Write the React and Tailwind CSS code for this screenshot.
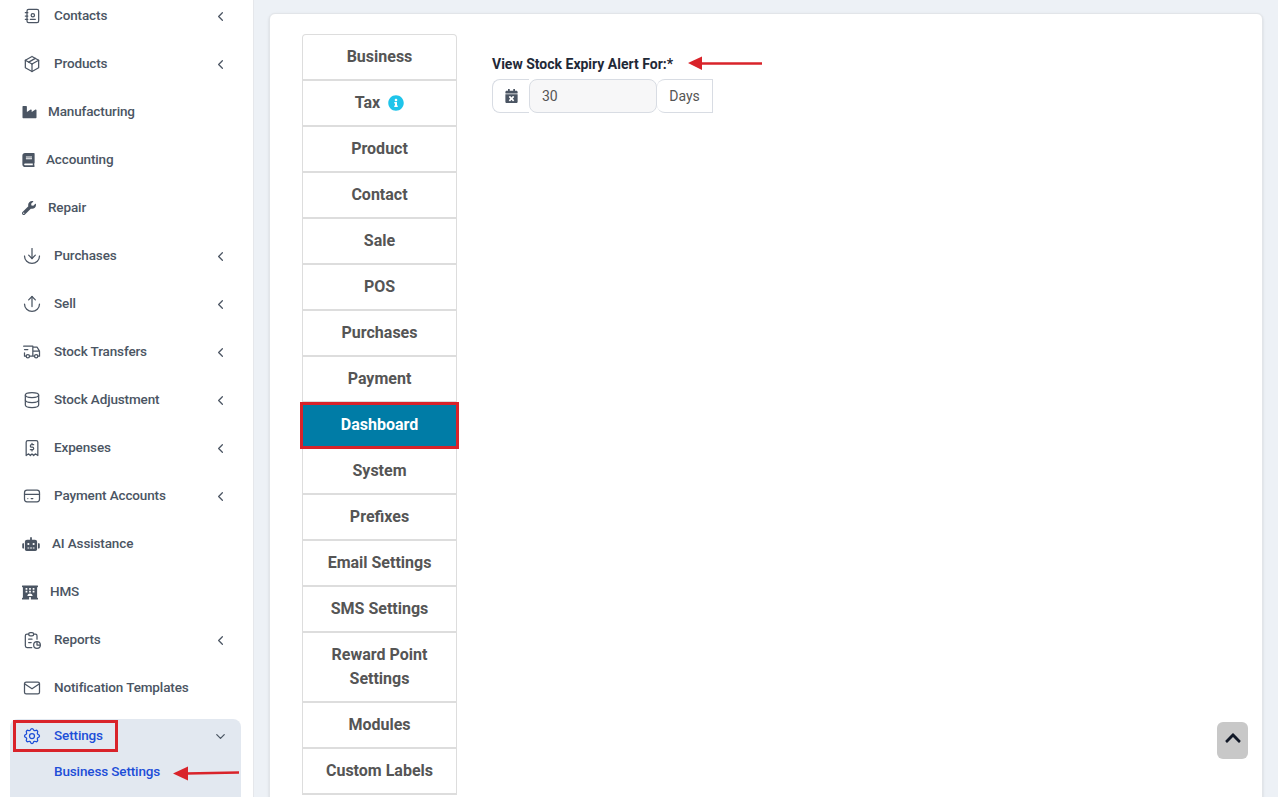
import React from 'react';
import { FaIndustry, FaBook, FaWrench, FaRobot, FaHotel, FaCalendarTimes, FaInfoCircle, FaChevronUp } from 'react-icons/fa';
import { TbAddressBook, TbPackage, TbTruckDelivery, TbDatabase, TbReceipt2, TbCreditCard, TbReport, TbMail, TbSettings, TbChevronLeft, TbChevronDown } from 'react-icons/tb';

const ArcDown = ({ className }) => (
  <svg className={className} viewBox="0 0 24 24" fill="none" stroke="currentColor" strokeWidth="1.5" strokeLinecap="round" strokeLinejoin="round">
    <path d="M12 3v12" />
    <path d="M16 11l-4 4l-4 -4" />
    <path d="M3 12a9 9 0 0 0 18 0" />
  </svg>
);

const ArcUp = ({ className }) => (
  <svg className={className} viewBox="0 0 24 24" fill="none" stroke="currentColor" strokeWidth="1.5" strokeLinecap="round" strokeLinejoin="round">
    <path d="M12 15v-12" />
    <path d="M16 7l-4 -4l-4 4" />
    <path d="M3 12a9 9 0 0 0 18 0" />
  </svg>
);

const outline = 'w-5 h-5 shrink-0 [stroke-width:1.5]';

const menu = [
  { label: 'Contacts', icon: <TbAddressBook className={outline} />, gap: 'gap-3', more: true },
  { label: 'Products', icon: <TbPackage className={outline} />, gap: 'gap-3', more: true },
  { label: 'Manufacturing', icon: <FaIndustry className="w-[15px] h-[14px] shrink-0" />, gap: 'gap-[11px]' },
  { label: 'Accounting', icon: <FaBook className="w-[13px] h-[14px] shrink-0" />, gap: 'gap-[11px]' },
  { label: 'Repair', icon: <FaWrench className="w-[14px] h-[14px] shrink-0" />, gap: 'gap-3' },
  { label: 'Purchases', icon: <ArcDown className="w-5 h-5 shrink-0" />, gap: 'gap-3', more: true },
  { label: 'Sell', icon: <ArcUp className="w-5 h-5 shrink-0" />, gap: 'gap-3', more: true },
  { label: 'Stock Transfers', icon: <TbTruckDelivery className={outline} />, gap: 'gap-3', more: true },
  { label: 'Stock Adjustment', icon: <TbDatabase className={outline} />, gap: 'gap-3', more: true },
  { label: 'Expenses', icon: <TbReceipt2 className={outline} />, gap: 'gap-3', more: true },
  { label: 'Payment Accounts', icon: <TbCreditCard className={outline} />, gap: 'gap-3', more: true },
  { label: 'AI Assistance', icon: <FaRobot className="w-[18px] h-[14px] shrink-0" />, gap: 'gap-3' },
  { label: 'HMS', icon: <FaHotel className="w-4 h-[15px] shrink-0" />, gap: 'gap-3' },
  { label: 'Reports', icon: <TbReport className={outline} />, gap: 'gap-3', more: true },
  { label: 'Notification Templates', icon: <TbMail className={outline} />, gap: 'gap-3' },
];

const tabs = ['Business', 'Tax', 'Product', 'Contact', 'Sale', 'POS', 'Purchases', 'Payment', 'Dashboard', 'System', 'Prefixes', 'Email Settings', 'SMS Settings', 'Reward Point Settings', 'Modules', 'Custom Labels'];

const Sidebar = () => (
  <aside className="w-[254px] shrink-0 bg-white border-r border-[#e5e7eb] overflow-hidden">
    <div className="-mt-2">
      {menu.map(item => (
        <div key={item.label} className={`h-12 flex items-center pl-[22px] text-[#4b5563] text-[13.5px] font-medium tracking-[-0.13px] ${item.gap}`}>
          {item.icon}
          <span className="pb-0.5">{item.label}</span>
          {item.more && <TbChevronLeft className="w-[15px] h-[15px] ml-auto mr-[25px] mt-px" />}
        </div>
      ))}
      <div className="mt-[7px] ml-[10px] w-[231px] bg-[#e2e8f0] rounded-t-lg h-[90px] text-[#1d4ed8] text-[13.5px] font-medium tracking-[-0.13px]">
        <div className="h-[34px] flex items-center gap-3 pl-3">
          <TbSettings className={outline} />
          <span className="pb-0.5">Settings</span>
          <TbChevronDown className="w-[15px] h-[15px] ml-auto mr-[13px] text-[#4b5563]" />
        </div>
        <div className="mt-[7px] h-6 flex items-center pl-11 pb-0.5">Business Settings</div>
      </div>
    </div>
  </aside>
);

const TabList = () => (
  <div className="w-[155px] shrink-0 flex flex-col">
    {tabs.map((tab, i) => {
      const active = tab === 'Dashboard';
      return (
        <div key={tab} className={`px-3 py-[10px] border-x border-b-2 text-center text-base leading-6 font-bold flex items-center justify-center gap-2 ${i === 0 ? 'border-t rounded-t-sm' : ''} ${active ? 'bg-[#007ca6] text-white border-[#007ca6]' : 'bg-white text-[#555555] border-[#dddddd]'}`}>
          <span>{tab}</span>
          {tab === 'Tax' && <FaInfoCircle className="w-4 h-4 text-[#1fc4ea]" />}
        </div>
      );
    })}
  </div>
);

const App = () => {
  return (
    <div className="relative flex h-[797px] overflow-hidden bg-[#edf1f6] font-['Roboto',sans-serif]">
      <Sidebar />

      <main className="flex-1 pt-[13px] pl-[15px] pr-[15px]">
        <div className="flex h-[900px] gap-[35px] bg-white border border-[#e2e5e9] rounded-md pt-5 pl-8 shadow-sm">
          <TabList />
          <div className="pt-5">
            <label className="block text-sm leading-5 font-bold text-[#1f2937] mb-[5px]">View Stock Expiry Alert For:*</label>
            <div className="flex h-[34px] text-sm text-[#555555]">
              <div className="w-[37px] flex items-center justify-center border border-r-0 border-[#d8dce3] rounded-l-lg bg-white">
                <FaCalendarTimes className="w-[13px] h-[14px] text-[#4b5563]" />
              </div>
              <div className="w-[128px] flex items-center px-3 border border-[#d8dce3] rounded-lg bg-[#f7f7f8]">30</div>
              <div className="w-[56px] flex items-center justify-center pb-px border border-l-0 border-[#d8dce3] rounded-l-lg bg-white">Days</div>
            </div>
          </div>
        </div>
      </main>

      <button className="absolute left-[1217px] top-[722px] w-[31px] h-[37px] rounded-md bg-[#c8c8c8] flex items-center justify-center text-[#111827]">
        <FaChevronUp className="w-[18px] h-[18px] -mt-1.5" />
      </button>

      {/* red annotations drawn over the page */}
      <div className="absolute left-[13px] top-[720px] w-[105px] h-[32px] border-[3px] border-[#d9232a]" />
      <div className="absolute left-[300px] top-[402px] w-[159px] h-[47px] border-[3px] border-[#d9232a]" />
      <svg className="absolute left-[172px] top-[764px] w-[68px] h-[18px]" viewBox="0 0 68 18">
        <path d="M67 8.5L14 9.5" stroke="#d9232a" strokeWidth="2.5" fill="none" />
        <path d="M1 9.5L16 2.5V16.5Z" fill="#d9232a" />
      </svg>
      <svg className="absolute left-[687px] top-[55px] w-[76px] h-[16px]" viewBox="0 0 76 16">
        <path d="M75 8.5H14" stroke="#d9232a" strokeWidth="2.5" fill="none" />
        <path d="M1 8L15 1.5V15Z" fill="#d9232a" />
      </svg>
    </div>
  );
};

export default App;
